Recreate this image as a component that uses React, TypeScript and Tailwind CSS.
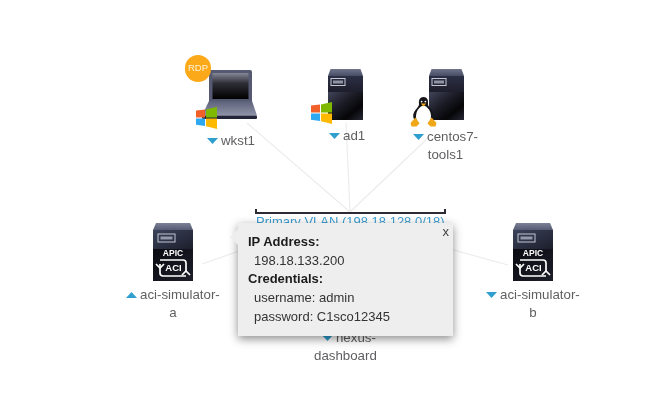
import React from "react";

function Tri({ up = false }: { up?: boolean }) {
  return (
    <svg width="11" height="6" viewBox="0 0 11 6" className="shrink-0">
      <path d={up ? "M0 6 L5.5 0 L11 6 Z" : "M0 0 L11 0 L5.5 6 Z"} fill="#2f9fd0" />
    </svg>
  );
}

function ServerBody({ id }: { id: string }) {
  return (
    <svg width="35" height="51" viewBox="0 0 35 51" className="block">
      <defs>
        <linearGradient id={id + "top"} x1="0" y1="0" x2="0" y2="1">
          <stop offset="0" stopColor="#6f748b" />
          <stop offset="1" stopColor="#464c64" />
        </linearGradient>
        <linearGradient id={id + "a"} x1="0" y1="0" x2="0" y2="1">
          <stop offset="0" stopColor="#2c3046" />
          <stop offset="1" stopColor="#1d1e2b" />
        </linearGradient>
        <linearGradient id={id + "b"} x1="0" y1="0" x2="1" y2="1">
          <stop offset="0" stopColor="#41455a" />
          <stop offset="0.4" stopColor="#1c1d27" />
          <stop offset="0.72" stopColor="#060608" />
          <stop offset="1" stopColor="#262836" />
        </linearGradient>
      </defs>
      <path d="M2.5 0 H32.5 L35 7 H0 Z" fill={`url(#${id}top)`} />
      <rect x="0" y="7" width="35" height="16" fill={`url(#${id}a)`} />
      <rect x="0" y="23" width="35" height="28" fill={`url(#${id}b)`} />
      <rect x="3" y="9.5" width="14" height="7" fill="none" stroke="#c4c7d2" strokeWidth="1" />
      <rect x="5" y="11.5" width="10" height="3" fill="#8f93a3" />
    </svg>
  );
}

function Apic({ id }: { id: string }) {
  return (
    <svg width="40" height="58" viewBox="0 0 40 58" className="block">
      <defs>
        <linearGradient id={id + "t"} x1="0" y1="0" x2="0" y2="1">
          <stop offset="0" stopColor="#7c8197" />
          <stop offset="1" stopColor="#555b73" />
        </linearGradient>
        <linearGradient id={id + "m"} x1="0" y1="0" x2="1" y2="1">
          <stop offset="0" stopColor="#3c425a" />
          <stop offset="1" stopColor="#1c1e2c" />
        </linearGradient>
        <linearGradient id={id + "b"} x1="0" y1="0" x2="1" y2="1">
          <stop offset="0" stopColor="#0a0a10" />
          <stop offset="1" stopColor="#1c1e2a" />
        </linearGradient>
      </defs>
      <path d="M3 0 H37 L40 7 H0 Z" fill={`url(#${id}t)`} />
      <rect x="0" y="7" width="40" height="19" fill={`url(#${id}m)`} />
      <rect x="0" y="26" width="40" height="32" fill={`url(#${id}b)`} />
      <rect x="5" y="11" width="17" height="8" fill="none" stroke="#c4c7d2" strokeWidth="1" />
      <rect x="7.5" y="13.5" width="12" height="3" fill="#9498a8" />
      <text x="20" y="33" textAnchor="middle" fontSize="8.5" fontWeight="700" fill="#fff" fontFamily="Liberation Sans, sans-serif">APIC</text>
      <text x="20.5" y="47.5" textAnchor="middle" fontSize="9.5" fontWeight="700" fill="#fff" fontFamily="Liberation Sans, sans-serif">ACI</text>
      <path d="M7 37 H30 Q33 37 33 40 V49" fill="none" stroke="#fff" strokeWidth="1.7" />
      <path d="M33 53 H10 Q7 53 7 50 V41" fill="none" stroke="#fff" strokeWidth="1.7" />
      <path d="M3 41 L7 45 L11 41 M29 52 L33 48 L37 52" fill="none" stroke="#fff" strokeWidth="1.7" />
    </svg>
  );
}

function Win() {
  return (
    <svg width="21" height="22" viewBox="0 0 21 22" className="block">
      <path d="M0 3.6 L9 2.6 V10.5 H0 Z" fill="#f2602a" />
      <path d="M10 2.4 L21 0 V10.5 H10 Z" fill="#7fb800" />
      <path d="M0 11.5 H9 V19 L0 17.8 Z" fill="#2ea8f0" />
      <path d="M10 11.5 H21 V22 L10 19.2 Z" fill="#ffb900" />
    </svg>
  );
}

function Tux() {
  return (
    <svg width="27" height="30" viewBox="0 0 27 30" className="block">
      <path d="M13.5 0 C9.8 0 8.6 3 9 7 C9.3 10 4 13 3.2 18 C2.8 21 4.8 24 7 26 H20 C22.2 24 24.2 21 23.8 18 C23 13 17.7 10 18 7 C18.4 3 17.2 0 13.5 0 Z" fill="#15151a" />
      <path d="M13.5 8.5 C9.5 9.5 6 14 6 19.5 C6 24 9 27.5 13.5 27.5 C18 27.5 21 24 21 19.5 C21 14 17.5 9.5 13.5 8.5 Z" fill="#fff" />
      <circle cx="11.6" cy="4.6" r="0.9" fill="#fff" />
      <circle cx="15.4" cy="4.6" r="0.9" fill="#fff" />
      <path d="M10.8 6.6 L16.2 6.6 L13.5 9.4 Z" fill="#f0a818" />
      <path d="M0.5 26 L5.5 20.5 L9.5 26.5 L6.5 29.5 H1.5 Z" fill="#f0a818" />
      <path d="M26.5 26 L21.5 20.5 L17.5 26.5 L20.5 29.5 H25.5 Z" fill="#f0a818" />
    </svg>
  );
}

function Laptop() {
  return (
    <svg width="55" height="49" viewBox="0 0 55 49" className="block">
      <defs>
        <linearGradient id="lscr" x1="0" y1="0" x2="0" y2="1">
          <stop offset="0" stopColor="#858896" />
          <stop offset="0.4" stopColor="#2d2d36" />
          <stop offset="1" stopColor="#000" />
        </linearGradient>
        <linearGradient id="lbase" x1="0" y1="0" x2="0" y2="1">
          <stop offset="0" stopColor="#5c617a" />
          <stop offset="1" stopColor="#8f93a8" />
        </linearGradient>
      </defs>
      <path d="M7 31 V2 Q7 0 9 0 H48 Q50 0 50 2 V31 Z" fill="#555a72" />
      <rect x="10.5" y="3" width="36" height="26" fill="url(#lscr)" />
      <path d="M7 31 H50 L55 45.5 H0 Z" fill="url(#lbase)" />
      <rect x="0" y="45.5" width="55" height="3.5" rx="1" fill="#23253a" />
    </svg>
  );
}

function NodeLabel({ first, second, up, indent }: { first: string; second?: string; up?: boolean; indent?: boolean }) {
  return (
    <div className="flex flex-col items-center text-[13.3px] leading-[18px] text-[#5f5f62]">
      <div className={`flex items-center gap-[3px] whitespace-nowrap ${indent ? "pl-[7px]" : ""}`}>
        <Tri up={up} />
        <span>{first}</span>
      </div>
      {second && <div className="whitespace-nowrap">{second}</div>}
    </div>
  );
}

function Popup() {
  return (
    <div className="absolute left-[238px] top-[223px] flex h-[113px] w-[215px] flex-col bg-[#eeeeee] pl-[10px] pt-[10px] text-[13px] leading-[18.7px] text-[#333333] shadow-[0_3px_9px_rgba(0,0,0,0.45)]">
      <div className="absolute left-[-8px] top-[6px] h-0 w-0 border-y-[8px] border-r-[8px] border-y-transparent border-r-[#eeeeee]" />
      <div className="absolute right-[4px] top-[0px] text-[13px] text-[#444]">x</div>
      <div className="font-bold text-[#1c1c1c]">IP Address:</div>
      <div className="pl-[6px]">198.18.133.200</div>
      <div className="font-bold text-[#1c1c1c]">Credentials:</div>
      <div className="pl-[6px]">username: admin</div>
      <div className="pl-[6px]">password: C1sco12345</div>
    </div>
  );
}

export default function App() {
  return (
    <div className="relative h-[412px] w-[646px] overflow-hidden bg-white font-['Liberation_Sans',sans-serif] blur-[0.35px]">
      <svg width="646" height="412" className="absolute left-0 top-0" fill="none" stroke="#ececec" strokeWidth="1.2">
        <path d="M247 123 L350 212" />
        <path d="M346 123 L350 212" />
        <path d="M428 138 L350 212" />
        <path d="M202 264 L245 249" />
        <path d="M450 249 L508 265" />
      </svg>

      <div className="absolute left-[185px] top-[55px] flex flex-col items-start">
        <div className="relative h-[77px] w-[72px]">
          <div className="absolute left-[17px] top-[15px]"><Laptop /></div>
          <div className="absolute left-0 top-0 flex h-[27px] w-[26px] items-center justify-center rounded-full bg-[#fba919] text-[9.5px] text-[#fff3d8]">RDP</div>
          <div className="absolute left-[11px] top-[52px]"><Win /></div>
        </div>
        <div className="pl-[22px]"><NodeLabel first="wkst1" /></div>
      </div>

      <div className="absolute left-[311px] top-[69px] flex flex-col items-start">
        <div className="relative h-[58px] w-[52px]">
          <div className="absolute left-[17px] top-0"><ServerBody id="s1" /></div>
          <div className="absolute left-0 top-[33px]"><Win /></div>
        </div>
        <div className="pl-[18px]"><NodeLabel first="ad1" /></div>
      </div>

      <div className="absolute left-[410px] top-[69px] flex flex-col items-start">
        <div className="relative h-[59px] w-[54px]">
          <div className="absolute left-[19px] top-0"><ServerBody id="s2" /></div>
          <div className="absolute left-0 top-[28px]"><Tux /></div>
        </div>
        <div className="pl-[3px]"><NodeLabel first="centos7-" second="tools1" /></div>
      </div>

      <div className="absolute left-[255px] top-[209px] flex w-[191px] flex-col">
        <div className="h-[5px] border-x-2 border-b-2 border-[#2b2b33]" />
        <div className="whitespace-nowrap pl-[1px] text-[13px] leading-[16px] text-[#3f9fd0]">Primary VLAN (198.18.128.0/18)</div>
      </div>

      <div className="absolute left-[126px] top-[223px] flex flex-col items-center gap-[5px]">
        <Apic id="a1" />
        <NodeLabel first="aci-simulator-" second="a" up />
      </div>

      <div className="absolute left-[486px] top-[223px] flex flex-col items-center gap-[5px]">
        <Apic id="a2" />
        <NodeLabel first="aci-simulator-" second="b" />
      </div>

      <div className="absolute left-[314px] top-[329px]"><NodeLabel first="nexus-" second="dashboard" indent /></div>

      <Popup />
    </div>
  );
}
